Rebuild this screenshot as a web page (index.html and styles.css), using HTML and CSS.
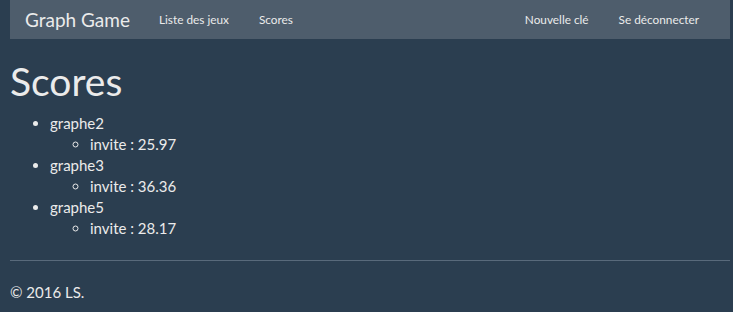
FILE: index.html
```html
<!DOCTYPE html>
<html lang="fr">
<head>
    <meta charset="UTF-8">
    <title>Graph Game - Scores</title>
    <link rel="stylesheet" href="styles.css">
</head>
<body>
    <div class="page">
        <div class="navbar">
            <a class="brand" href="#">Graph Game</a>
            <ul class="nav">
                <li><a href="#">Liste des jeux</a></li>
                <li><a href="#">Scores</a></li>
            </ul>
            <ul class="nav nav-right">
                <li><a href="#">Nouvelle clé</a></li>
                <li><a href="#">Se déconnecter</a></li>
            </ul>
        </div>

        <h1>Scores</h1>
        <ul class="scores">
            <li>graphe2
                <ul><li>invite : 25.97</li></ul>
            </li>
            <li>graphe3
                <ul><li>invite : 36.36</li></ul>
            </li>
            <li>graphe5
                <ul><li>invite : 28.17</li></ul>
            </li>
        </ul>

        <hr>
        <div class="footer">
            <p>&copy; 2016 LS.</p>
        </div>
    </div>
</body>
</html>
```

FILE: styles.css
```css
/* Reset */
* {
    margin: 0;
    padding: 0;
    box-sizing: border-box;
}

body {
    background-color: #2b3e50;
    color: #ebebeb;
    font-family: Lato, 'Liberation Sans', sans-serif;
    font-size: 15px;
    line-height: 21px;
}

.page {
    width: 720px;
    margin-left: 10px;
}

/* Navbar */
.navbar {
    display: flex;
    align-items: center;
    height: 39px;
    background-color: #4e5d6c;
}

.navbar a {
    color: #ebebeb;
    text-decoration: none;
}

.brand {
    font-size: 19px;
    padding: 0 14px 0 15px;
    line-height: 39px;
}

.nav {
    display: flex;
    list-style: none;
}

.nav a {
    display: block;
    font-size: 11.8px;
    padding: 0 15px;
    line-height: 39px;
}

.nav-right {
    margin-left: auto;
    padding-right: 16px;
}

/* Content */
h1 {
    font-size: 39px;
    font-weight: normal;
    line-height: 43px;
    margin: 21px 0 10px;
}

.scores {
    padding-left: 40px;
}

.scores ul {
    padding-left: 40px;
    list-style-type: circle;
}

hr {
    border: 0;
    border-top: 1px solid #596a7b;
    margin: 21px 0;
}

.footer p {
    margin-top: 2px;
}
```
